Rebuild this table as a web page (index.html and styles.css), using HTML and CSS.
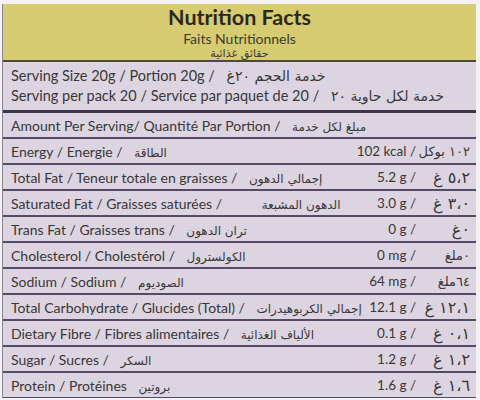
FILE: index.html
```html
<!DOCTYPE html>
<html lang="en">
<head>
  <meta charset="UTF-8" />
  <title>Nutrition Facts</title>
  <link rel="stylesheet" href="styles.css">
</head>
<body>
  <div class="label">
    <header class="head">
      <h1>Nutrition Facts</h1>
      <p class="fr">Faits Nutritionnels</p>
      <p class="ar head-ar">حقائق غذائية</p>
    </header>

    <section class="serving">
      <p>Serving Size 20g / Portion 20g / <span class="ar">خدمة الحجم ٢٠غ</span></p>
      <p>Serving per pack 20 / Service par paquet de 20 / <span class="ar">خدمة لكل حاوية ٢٠</span></p>
    </section>

    <ul class="facts">
      <li class="row">
        <span class="name">Amount Per Serving/ Quantité Par Portion / <span class="ar">مبلغ لكل خدمة</span></span>
      </li>
      <li class="row">
        <span class="name">Energy / Energie / <span class="ar">الطاقة</span></span>
        <span class="val">102 kcal /</span>
        <span class="val-ar small">١٠٢ بوكل</span>
      </li>
      <li class="row">
        <span class="name">Total Fat / Teneur totale en graisses / <span class="ar">إجمالي الدهون</span></span>
        <span class="val">5.2 g /</span>
        <span class="val-ar">٥،٢ غ</span>
      </li>
      <li class="row">
        <span class="name">Saturated Fat / Graisses saturées / <span class="ar wide">الدهون المشبعة</span></span>
        <span class="val">3.0 g /</span>
        <span class="val-ar">٣،٠ غ</span>
      </li>
      <li class="row">
        <span class="name">Trans Fat / Graisses trans / <span class="ar">تران الدهون</span></span>
        <span class="val">0 g /</span>
        <span class="val-ar">٠غ</span>
      </li>
      <li class="row">
        <span class="name">Cholesterol / Cholestérol / <span class="ar">الكولسترول</span></span>
        <span class="val">0 mg /</span>
        <span class="val-ar small">٠ملغ</span>
      </li>
      <li class="row">
        <span class="name">Sodium / Sodium / <span class="ar">الصوديوم</span></span>
        <span class="val">64 mg /</span>
        <span class="val-ar small">٦٤ملغ</span>
      </li>
      <li class="row">
        <span class="name">Total Carbohydrate / Glucides (Total) / <span class="ar">إجمالي الكربوهيدرات</span></span>
        <span class="val">12.1 g /</span>
        <span class="val-ar">١٢،١ غ</span>
      </li>
      <li class="row">
        <span class="name">Dietary Fibre / Fibres alimentaires / <span class="ar">الألياف الغذائية</span></span>
        <span class="val">0.1 g /</span>
        <span class="val-ar">٠،١ غ</span>
      </li>
      <li class="row">
        <span class="name">Sugar / Sucres / <span class="ar">السكر</span></span>
        <span class="val">1.2 g /</span>
        <span class="val-ar">١،٢ غ</span>
      </li>
      <li class="row">
        <span class="name">Protein / Protéines <span class="ar">بروتين</span></span>
        <span class="val">1.6 g /</span>
        <span class="val-ar">١،٦ غ</span>
      </li>
    </ul>
  </div>
</body>
</html>
```

FILE: styles.css
```css
body {
  margin: 0;
  padding: 0;
  background-color: #f4f2f4;
  font-family: Lato, 'Open Sans', sans-serif;
  color: #3a3536;
}

.label {
  margin: 4px 4px 0 2px;
  background-color: #dcd5e1;
  border-left: 1px solid #8a8492;
  height: 394px;
  overflow: hidden;
}

.head {
  height: 56px;
  background-color: #d7cc72;
  border-bottom: 2px solid #4f4a3c;
  text-align: center;
  overflow: hidden;
}

.head h1 {
  margin: 0;
  font-size: 21.5px;
  line-height: 26px;
  font-weight: 700;
  color: #2b271e;
}

.head .fr {
  margin: 0;
  font-size: 14px;
  line-height: 17px;
  color: #3c3a30;
}

.head .head-ar {
  margin: 0;
  font-size: 11px;
  line-height: 13px;
  color: #3c3a30;
}

.ar {
  font-family: 'DejaVu Sans', sans-serif;
  font-size: 12px;
  direction: rtl;
  unicode-bidi: isolate;
  margin-left: 8px;
}

.ar.wide {
  margin-left: 36px;
}

.serving {
  height: 44px;
  padding: 4px 0 0 8px;
  border-bottom: 3px solid #3e3548;
}

.serving p {
  margin: 0;
  font-size: 14.5px;
  line-height: 20px;
}

.serving .ar {
  font-size: 14px;
}

.facts {
  list-style: none;
  margin: 0;
  padding: 0;
}

.row {
  display: flex;
  align-items: center;
  height: 24px;
  padding-left: 8px;
  border-bottom: 2px solid #564b66;
  font-size: 14px;
}

.name {
  flex: 1;
  white-space: nowrap;
}

.val {
  margin-right: 10px;
  font-size: 13.5px;
}

.val-ar {
  width: 44px;
  padding-right: 6px;
  font-family: 'DejaVu Sans', sans-serif;
  font-size: 16px;
  direction: rtl;
  text-align: right;
  white-space: nowrap;
}

.val-ar.small {
  font-size: 13px;
}
```
